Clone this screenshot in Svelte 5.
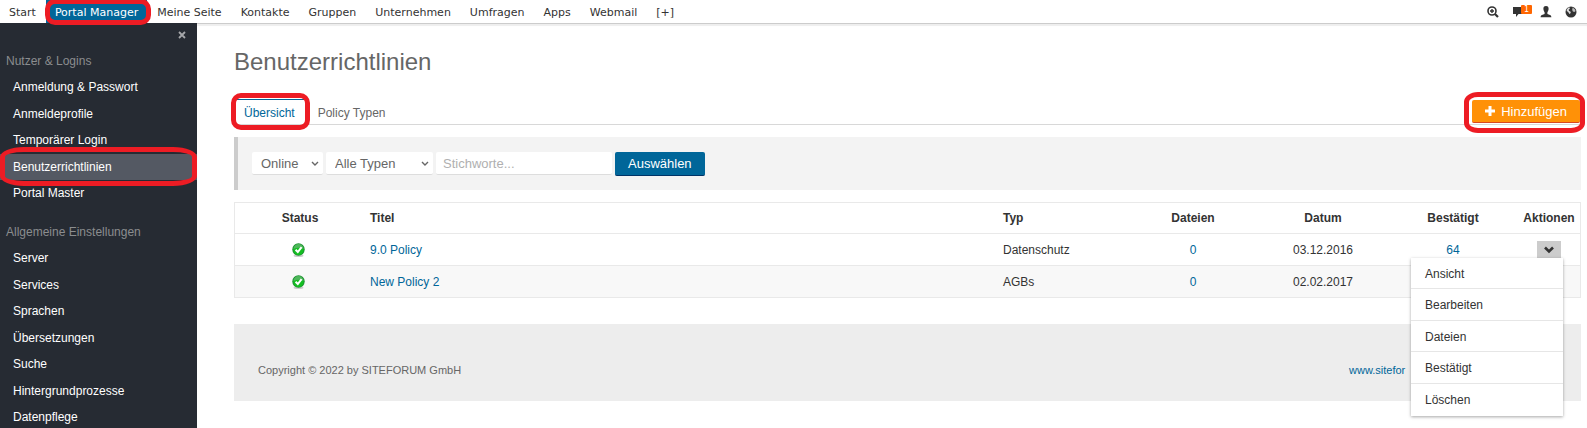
<script>
  let navItems = [
    "Start",
    "Portal Manager",
    "Meine Seite",
    "Kontakte",
    "Gruppen",
    "Unternehmen",
    "Umfragen",
    "Apps",
    "Webmail",
    "[+]",
  ];
  let activeNav = "Portal Manager";

  let groups = [
    {
      title: "Nutzer & Logins",
      items: [
        "Anmeldung & Passwort",
        "Anmeldeprofile",
        "Temporärer Login",
        "Benutzerrichtlinien",
        "Portal Master",
      ],
    },
    {
      title: "Allgemeine Einstellungen",
      items: [
        "Server",
        "Services",
        "Sprachen",
        "Übersetzungen",
        "Suche",
        "Hintergrundprozesse",
        "Datenpflege",
      ],
    },
  ];
  let activeItem = "Benutzerrichtlinien";

  let policies = [
    { title: "9.0 Policy", type: "Datenschutz", files: 0, date: "03.12.2016", confirmed: 64 },
    { title: "New Policy 2", type: "AGBs", files: 0, date: "02.02.2017", confirmed: "" },
  ];

  let actions = ["Ansicht", "Bearbeiten", "Dateien", "Bestätigt", "Löschen"];
  let openRow = 0;

  let status = "Online";
  let type = "Alle Typen";
  let keywords = "";

  function toggleMenu(index) {
    openRow = openRow === index ? -1 : index;
  }
</script>

<div class="page">
  <header>
    <nav>
      {#each navItems as item}
        <a href="#top" class:active={item === activeNav}>
          {item}
          {#if item === activeNav}<span class="ring ring-nav"></span>{/if}
        </a>
      {/each}
    </nav>
    <div class="tools">
      <button type="button" aria-label="Suche">
        <svg width="12" height="12" viewBox="0 0 12 12">
          <circle cx="5" cy="5" r="4" fill="none" stroke="#333" stroke-width="1.6" />
          <path d="M5 3v4M3 5h4" stroke="#333" stroke-width="1.4" />
          <path d="M8 8l3 3" stroke="#333" stroke-width="2.2" />
        </svg>
      </button>
      <button type="button" aria-label="Nachrichten" class="messages">
        <svg width="12" height="12" viewBox="0 0 12 12">
          <path d="M1 1h11v7H6.500L4 11V8H1z" fill="#333" />
        </svg>
        <span class="badge">1</span>
      </button>
      <button type="button" aria-label="Profil">
        <svg width="12" height="12" viewBox="0 0 12 12">
          <path
            d="M6 0C7.9 0 8.7 1.3 8.6 3C8.5 4.7 7.8 5.500 7.400 6.200V8C9 8.600 11.400 8.800 11.400 11.300H.6C.6 8.800 3 8.600 4.600 8V6.200C4.200 5.500 3.500 4.700 3.400 3C3.300 1.300 4.100 0 6 0z"
            fill="#333"
          />
        </svg>
      </button>
      <button type="button" aria-label="Sprache">
        <svg width="12" height="12" viewBox="0 0 12 12">
          <circle cx="6" cy="6" r="5.5" fill="#333" />
          <path d="M1.800 3.500l1.600-1.900 1.600.1-.4 1.400-1 .6.5 1.200 1.300.5.4 1.500-1.400 1-1.200-2-1.500-1z" fill="#ddd" />
          <path d="M7.600 1.600l2 1.400 1 2-1.200 1-1.500-.5-.7-1.500z" fill="#bbb" />
        </svg>
      </button>
    </div>
  </header>

  <div class="body">
    <aside>
      <button type="button" class="close" aria-label="Schließen">
        <svg width="8" height="8" viewBox="0 0 8 8">
          <path d="M1 1l6 6M7 1L1 7" stroke="#a5a7aa" stroke-width="1.800" />
        </svg>
      </button>
      {#each groups as group}
        <h2>{group.title}</h2>
        <ul>
          {#each group.items as item}
            <li class:selected={item === activeItem}>
              <a href="#top">{item}</a>
              {#if item === activeItem}<span class="ring ring-side"></span>{/if}
            </li>
          {/each}
        </ul>
      {/each}
    </aside>

    <main>
      <h1>Benutzerrichtlinien</h1>

      <div class="tabs">
        <a href="#top" class="tab current">Übersicht<span class="ring ring-tab"></span></a>
        <a href="#top" class="tab">Policy Typen</a>
        <button type="button" class="add">
          <svg width="10" height="10" viewBox="0 0 10 10">
            <path d="M5 0v10M0 5h10" stroke="#fff" stroke-width="3" />
          </svg>
          Hinzufügen
          <span class="ring ring-add"></span>
        </button>
      </div>

      <form class="filter" on:submit|preventDefault>
        <div class="select status">
          <select bind:value={status} aria-label="Status">
            <option>Online</option>
            <option>Offline</option>
          </select>
          <svg width="8" height="6" viewBox="0 0 8 6">
            <path d="M1 1l3 3 3-3" fill="none" stroke="#666" stroke-width="1.400" />
          </svg>
        </div>
        <div class="select type">
          <select bind:value={type} aria-label="Typ">
            <option>Alle Typen</option>
            <option>Datenschutz</option>
            <option>AGBs</option>
          </select>
          <svg width="8" height="6" viewBox="0 0 8 6">
            <path d="M1 1l3 3 3-3" fill="none" stroke="#666" stroke-width="1.400" />
          </svg>
        </div>
        <input type="text" bind:value={keywords} placeholder="Stichworte..." aria-label="Stichworte" />
        <button type="submit">Auswählen</button>
      </form>

      <table>
        <thead>
          <tr>
            <th class="w">Status</th>
            <th class="left">Titel</th>
            <th class="w left">Typ</th>
            <th class="w">Dateien</th>
            <th class="w">Datum</th>
            <th class="w">Bestätigt</th>
            <th class="narrow">Aktionen</th>
          </tr>
        </thead>
        <tbody>
          {#each policies as policy, index}
            <tr>
              <td>
                <svg class="ok" width="16" height="14" viewBox="0 0 16 14" role="img" aria-label="Online">
                  <ellipse cx="6.500" cy="12.800" rx="5" ry="1.200" fill="#ccc" />
                  <circle cx="6.500" cy="6.500" r="6.200" fill="#1c9230" />
                  <circle cx="6.500" cy="6.800" r="5.200" fill="#14bf22" />
                  <path d="M1.500 6A5 5 0 0 1 11.500 6Q6.500 3.500 1.500 6z" fill="#4fb65c" />
                  <path d="M3.600 6.800l2.200 2.200 3.800-4.800" fill="none" stroke="#fff" stroke-width="2" />
                </svg>
              </td>
              <td class="left"><a href="#top">{policy.title}</a></td>
              <td class="left">{policy.type}</td>
              <td><a href="#top">{policy.files}</a></td>
              <td>{policy.date}</td>
              <td>{#if policy.confirmed}<a href="#top">{policy.confirmed}</a>{/if}</td>
              <td>
                <div class="actions">
                  <button type="button" aria-label="Aktionen" on:click={() => toggleMenu(index)}>
                    <svg width="10" height="8" viewBox="0 0 10 8">
                      <path d="M1 1.500l4 4 4-4" fill="none" stroke="#333" stroke-width="2.600" />
                    </svg>
                  </button>
                  {#if openRow === index}
                    <ul class="menu">
                      {#each actions as action}
                        <li><a href="#top">{action}</a></li>
                      {/each}
                    </ul>
                  {/if}
                </div>
              </td>
            </tr>
          {/each}
        </tbody>
      </table>

      <footer>
        <span>Copyright © 2022 by SITEFORUM GmbH</span>
        <div class="links"><a href="#top">www.sitefor</a></div>
      </footer>
    </main>
  </div>
</div>

<style>
  :global(body) {
    background: #fff;
    color: #333;
    font-family: "Liberation Sans", Arial, sans-serif;
    font-size: 12px;
    line-height: 14px;
  }

  a {
    color: #069;
    text-decoration: none;
  }

  button,
  input,
  select {
    box-sizing: border-box;
    margin: 0;
    padding: 0;
    border: none;
    font-family: inherit;
  }

  button {
    cursor: pointer;
  }

  svg {
    display: block;
  }

  ul {
    list-style: none;
    margin: 0;
    padding: 0;
  }

  .page {
    display: flex;
    flex-direction: column;
    height: 100vh;
  }

  header {
    display: flex;
    justify-content: space-between;
    flex: none;
    height: 23px;
    font-family: "DejaVu Sans", Verdana, sans-serif;
    font-size: 11px;
    line-height: 21px;
  }

  nav {
    display: flex;
    gap: 1px;
  }

  nav a {
    position: relative;
    padding: 2px 9px 0;
    color: #333;
  }

  nav a.active {
    background: #069;
    color: #fff;
  }

  .tools {
    display: flex;
    align-items: center;
    gap: 13px;
    padding-right: 10px;
  }

  .tools button {
    position: relative;
    background: none;
  }

  .badge {
    position: absolute;
    top: -1px;
    left: 9px;
    width: 11px;
    height: 9px;
    border-radius: 1px;
    background: #f60;
    color: #fff;
    font-family: "DejaVu Sans", Verdana, sans-serif;
    font-size: 8px;
    line-height: 9px;
    text-align: center;
  }

  .messages {
    margin-right: 3px;
  }

  .body {
    display: flex;
    flex: 1;
    min-height: 0;
  }

  aside {
    flex: none;
    width: 197px;
    background: #262b33;
    overflow: hidden;
  }

  .close {
    display: block;
    margin: 8px 11px 0 auto;
    background: none;
  }

  h2 {
    margin: 0;
    padding: 15px 6px 0;
    color: #8b8d8f;
    font-size: 12px;
    font-weight: normal;
    line-height: 14px;
  }

  ul + h2 {
    padding-top: 18px;
  }

  aside ul {
    padding-top: 6px;
  }

  aside li {
    position: relative;
  }

  aside li:nth-child(odd) {
    margin-bottom: 1px;
  }

  aside li a {
    display: block;
    padding: 6px 13px;
    color: #fff;
  }

  aside li.selected {
    background: #545963;
  }

  main {
    flex: 1;
    padding: 23px 6px 0 37px;
    border-top: 1px solid #ccc;
    box-shadow: inset 0 2px 1px #eee;
  }

  h1 {
    margin: 0 0 24px;
    padding-top: 1px;
    color: #666;
    font-size: 24px;
    font-weight: normal;
    line-height: 27px;
  }

  .tabs {
    display: flex;
    gap: 3px;
    height: 25px;
    border-bottom: 1px solid #d8d8d8;
  }

  .tab {
    position: relative;
    padding: 1px 10px 0;
    border-top: 1px solid transparent;
    color: #666;
    line-height: 25px;
  }

  .tab.current {
    background: #fff;
    border-top-color: #069;
    color: #069;
  }

  .add {
    position: relative;
    display: flex;
    align-items: center;
    gap: 6px;
    height: 23px;
    margin: 1px 1px 0 auto;
    padding: 0 13px;
    border-bottom: 1px solid #d8471f;
    border-radius: 2px;
    background: #ff9107;
    color: #fff;
    font-size: 13px;
  }

  .filter {
    display: flex;
    align-items: flex-start;
    gap: 3px;
    margin: 12px 0;
    padding: 15px 14px 14px;
    border-left: 4px solid #ccc;
    background: #f3f3f3;
  }

  .select {
    position: relative;
  }

  .select svg {
    position: absolute;
    right: 4px;
    top: 9px;
    pointer-events: none;
  }

  .filter select,
  .filter input {
    display: block;
    width: 100%;
    height: 23px;
    padding: 0 9px;
    border-bottom: 1px solid #ddd;
    border-radius: 2px;
    appearance: none;
    background: #fff;
    color: #666;
    font-size: 13px;
  }

  .status {
    width: 71px;
  }

  .type {
    width: 107px;
  }

  .filter input {
    width: 176px;
    padding: 0 7px;
  }

  .filter input::placeholder {
    color: #b0b0b0;
  }

  .filter button {
    height: 24px;
    padding: 0 13px;
    border-bottom: 1px solid #036;
    border-radius: 2px;
    background: #069;
    color: #fff;
    font-size: 13px;
  }

  table {
    width: 100%;
    border: 1px solid #e9e9e9;
    border-spacing: 0;
    table-layout: fixed;
  }

  th,
  td {
    box-sizing: border-box;
    height: 32px;
    padding: 0 5px;
    border-bottom: 1px solid #e9e9e9;
    text-align: center;
  }

  th {
    height: 31px;
  }

  tbody tr:last-child td {
    height: 31px;
    border-bottom: none;
    background: #f8f8f8;
  }

  .left {
    text-align: left;
  }

  .w {
    width: 130px;
  }

  .narrow {
    width: 62px;
  }

  .ok {
    margin: 0 auto;
  }

  .actions {
    position: relative;
    width: 24px;
    margin: 0 auto;
  }

  .actions button {
    display: flex;
    align-items: center;
    justify-content: center;
    width: 24px;
    height: 17px;
    background: #ccc;
  }

  .menu {
    position: absolute;
    top: 100%;
    right: -2px;
    width: 152px;
    background: #fff;
    box-shadow: 0 1px 3px rgba(0, 0, 0, 0.35);
    text-align: left;
    z-index: 2;
  }

  .menu li {
    padding-top: 1px;
    border-bottom: 1px solid #e6e6e6;
    line-height: 30px;
  }

  .menu li:last-child {
    padding-bottom: 2px;
    border-bottom: none;
  }

  .menu li:nth-child(odd) a {
    margin-bottom: -1px;
  }

  .menu a {
    display: block;
    padding: 0 14px;
    color: #333;
  }

  footer {
    display: flex;
    justify-content: space-between;
    margin-top: 26px;
    padding: 39px 24px 24px;
    background: #ededed;
    color: #666;
    font-size: 11px;
  }

  .links {
    width: 208px;
  }

  /* red highlight frames */
  .ring {
    position: absolute;
    border: 5px solid #ed1c24;
    border-radius: 10px;
    pointer-events: none;
    z-index: 1;
  }

  .ring-nav {
    inset: -1px -4px -2px -1px;
  }

  .ring-side {
    inset: -7px 0 -6px 0;
    border-radius: 24px / 10px;
  }

  .ring-tab {
    inset: -7px -5px -6px -3px;
  }

  .ring-add {
    inset: -8px -5px -11px -8px;
    border-radius: 14px / 10px;
  }
</style>
